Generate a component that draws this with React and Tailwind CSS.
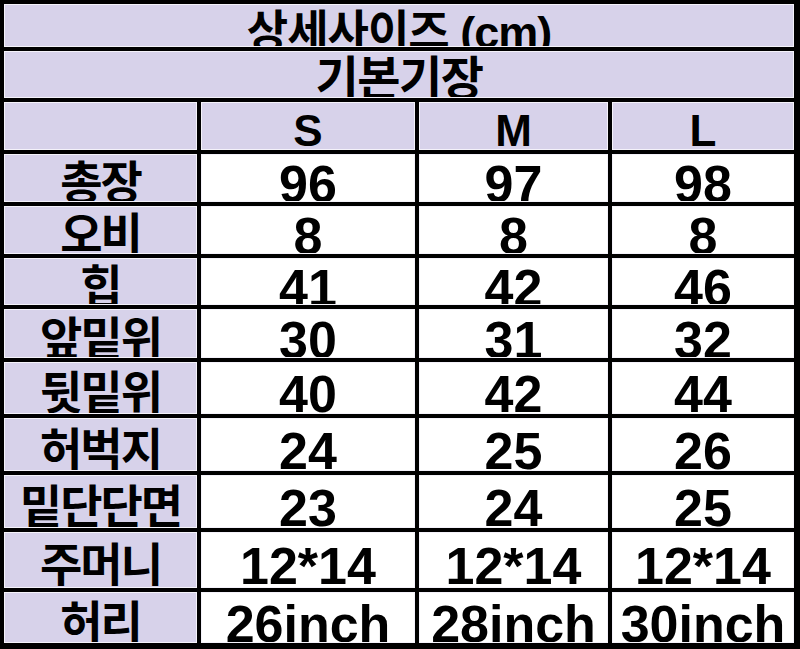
import React from "react";

const LAV = "bg-[#d7d2ea]";
const kr = { fontFamily: '"Liberation Sans", "Noto Sans CJK KR", sans-serif' };

const rows = [
  ["총장", "96", "97", "98"],
  ["오비", "8", "8", "8"],
  ["힙", "41", "42", "46"],
  ["앞밑위", "30", "31", "32"],
  ["뒷밑위", "40", "42", "44"],
  ["허벅지", "24", "25", "26"],
  ["밑단단면", "23", "24", "25"],
  ["주머니", "12*14", "12*14", "12*14"],
  ["허리", "26inch", "28inch", "30inch"],
];

function Cell({ children, lav, className = "" }) {
  return (
    <div
      className={`overflow-hidden flex items-center justify-center border border-[#f4f2fa] ${
        lav ? LAV : "bg-white"
      } ${className}`}
    >
      {children}
    </div>
  );
}

export default function App() {
  return (
    <div
      className="w-[800px] h-[649px] bg-black pl-[4px] pt-[4px] overflow-hidden"
      style={kr}
    >
      <div className="grid grid-cols-[193px_214px_189px_182px] grid-rows-[43px_47px_48px_48px_48px_47px_49px_52px_53px_53px_56px_51px] gap-[4px] font-bold text-black">
        <Cell lav className="col-span-4">
          <span className="text-[45px] leading-none tracking-[-1px] translate-y-[7px]">
            상세사이즈 (cm)
          </span>
        </Cell>
        <Cell lav className="col-span-4">
          <span className="text-[47px] leading-none tracking-[-1.5px] translate-y-[4px]">
            기본기장
          </span>
        </Cell>
        <Cell lav />
        {["S", "M", "L"].map((s) => (
          <Cell lav key={s}>
            <span className="text-[44px] leading-none translate-y-[5px]">{s}</span>
          </Cell>
        ))}
        {rows.map((r) => (
          <React.Fragment key={r[0]}>
            <Cell lav>
              <span className="text-[46px] leading-none tracking-[-2px] translate-y-[5px]">
                {r[0]}
              </span>
            </Cell>
            {r.slice(1).map((v, i) => (
              <Cell key={i}>
                <span className="text-[52px] leading-none translate-y-[6px]">{v}</span>
              </Cell>
            ))}
          </React.Fragment>
        ))}
      </div>
    </div>
  );
}
